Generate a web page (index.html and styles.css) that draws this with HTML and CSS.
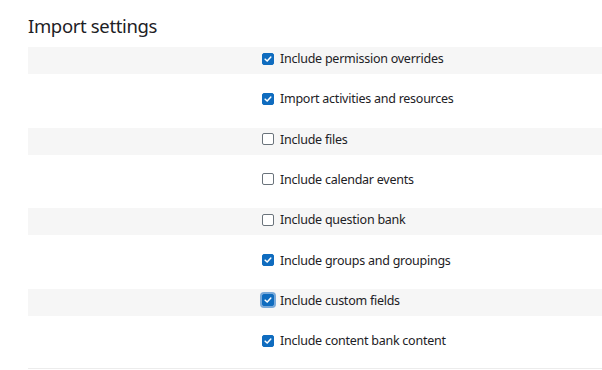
FILE: index.html
```html
<!DOCTYPE html>
<html lang="en">
<head>
  <meta charset="UTF-8">
  <meta name="viewport" content="width=device-width, initial-scale=1.0">
  <link rel="stylesheet" href="styles.css">
  <title>Import settings</title>
</head>
<body>
  <div class="import_settings">
    <h2 class="section_title">Import settings</h2>
    <div class="settings_list">
      <label class="setting_row striped">
        <span class="check checked"><svg viewBox="0 0 12 12"><path d="M2.6 6.2 L5 8.5 L9.4 3.6"/></svg></span>
        <span class="setting_label">Include permission overrides</span>
      </label>
      <label class="setting_row">
        <span class="check checked"><svg viewBox="0 0 12 12"><path d="M2.6 6.2 L5 8.5 L9.4 3.6"/></svg></span>
        <span class="setting_label">Import activities and resources</span>
      </label>
      <label class="setting_row striped">
        <span class="check"></span>
        <span class="setting_label">Include files</span>
      </label>
      <label class="setting_row">
        <span class="check"></span>
        <span class="setting_label">Include calendar events</span>
      </label>
      <label class="setting_row striped">
        <span class="check"></span>
        <span class="setting_label">Include question bank</span>
      </label>
      <label class="setting_row">
        <span class="check checked"><svg viewBox="0 0 12 12"><path d="M2.6 6.2 L5 8.5 L9.4 3.6"/></svg></span>
        <span class="setting_label">Include groups and groupings</span>
      </label>
      <label class="setting_row striped">
        <span class="check checked focused"><svg viewBox="0 0 12 12"><path d="M2.6 6.2 L5 8.5 L9.4 3.6"/></svg></span>
        <span class="setting_label">Include custom fields</span>
      </label>
      <label class="setting_row">
        <span class="check checked"><svg viewBox="0 0 12 12"><path d="M2.6 6.2 L5 8.5 L9.4 3.6"/></svg></span>
        <span class="setting_label">Include content bank content</span>
      </label>
    </div>
  </div>
</body>
</html>
```

FILE: styles.css
```css
/* Basics */
body {
  margin: 0;
  font-family: "Noto Sans", "Open Sans", sans-serif;
  color: #1d2125;
  background-color: #ffffff;
}

.import_settings {
  padding-left: 28px;
}

/* Title */
.section_title {
  margin: 0;
  padding-top: 14px;
  margin-bottom: 9px;
  font-size: 18.5px;
  line-height: 24px;
  letter-spacing: -0.35px;
  font-weight: normal;
}

/* Settings rows */
.settings_list {
  display: flex;
  flex-direction: column;
  gap: 13.33px;
  padding-bottom: 12px;
  border-bottom: 1px solid #ececec;
}

.setting_row {
  display: flex;
  align-items: center;
  gap: 6px;
  height: 27px;
  padding-left: 234px;
  padding-bottom: 4px;
  box-sizing: border-box;
  font-size: 12.5px;
  letter-spacing: -0.25px;
  cursor: pointer;
}

.striped {
  background-color: #f6f6f6;
}

/* Checkbox */
.check {
  display: flex;
  align-items: center;
  justify-content: center;
  flex-shrink: 0;
  width: 12px;
  height: 12px;
  box-sizing: border-box;
  border: 1px solid #6a737b;
  border-radius: 2px;
  background-color: #ffffff;
}

.check.checked {
  border-color: #0f6cbf;
  background-color: #0f6cbf;
}

.check svg {
  width: 10px;
  height: 10px;
  fill: none;
  stroke: #ffffff;
  stroke-width: 1.8;
  stroke-linecap: round;
  stroke-linejoin: round;
}

.check.focused {
  box-shadow: 0 0 0 2px #79a9d9;
}
```
